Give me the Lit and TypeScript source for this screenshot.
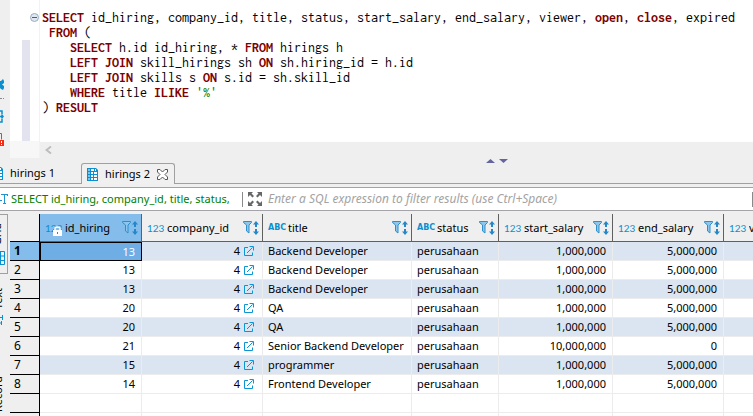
import { LitElement, html, css, svg, nothing } from "lit";
import { customElement, state } from "lit/decorators.js";
import { classMap } from "lit/directives/class-map.js";

type Token = [string, "k" | "s" | ""];

const QUERY: Token[][] = [
  [["SELECT", "k"], [" id_hiring, company_id, title, status, start_salary, end_salary, viewer, ", ""], ["open", "k"], [", ", ""], ["close", "k"], [", expired", ""]],
  [[" ", ""], ["FROM", "k"], [" (", ""]],
  [["    ", ""], ["SELECT", "k"], [" h.id id_hiring, * ", ""], ["FROM", "k"], [" hirings h", ""]],
  [["    ", ""], ["LEFT JOIN", "k"], [" skill_hirings sh ", ""], ["ON", "k"], [" sh.hiring_id = h.id", ""]],
  [["    ", ""], ["LEFT JOIN", "k"], [" skills s ", ""], ["ON", "k"], [" s.id = sh.skill_id", ""]],
  [["    ", ""], ["WHERE", "k"], [" title ", ""], ["ILIKE", "k"], [" ", ""], ["'%'", "s"]],
  [[") ", ""], ["RESULT", "k"]],
];

interface Column {
  name: string;
  kind: "num" | "text";
  width: number;
  link?: boolean;
  locked?: boolean;
}

const COLUMNS: Column[] = [
  { name: "id_hiring", kind: "num", width: 102, locked: true },
  { name: "company_id", kind: "num", width: 121, link: true },
  { name: "title", kind: "text", width: 149 },
  { name: "status", kind: "text", width: 87 },
  { name: "start_salary", kind: "num", width: 114 },
  { name: "end_salary", kind: "num", width: 111 },
  { name: "viewer", kind: "num", width: 111 },
];

const ROWS: string[][] = [
  ["13", "4", "Backend Developer", "perusahaan", "1,000,000", "5,000,000", ""],
  ["13", "4", "Backend Developer", "perusahaan", "1,000,000", "5,000,000", ""],
  ["13", "4", "Backend Developer", "perusahaan", "1,000,000", "5,000,000", ""],
  ["20", "4", "QA", "perusahaan", "1,000,000", "5,000,000", ""],
  ["20", "4", "QA", "perusahaan", "1,000,000", "5,000,000", ""],
  ["21", "4", "Senior Backend Developer", "perusahaan", "10,000,000", "0", ""],
  ["15", "4", "programmer", "perusahaan", "1,000,000", "5,000,000", ""],
  ["14", "4", "Frontend Developer", "perusahaan", "1,000,000", "5,000,000", ""],
];

const icon = (w: number, h: number, body: unknown) =>
  html`<svg width=${w} height=${h} viewBox="0 0 ${w} ${h}" aria-hidden="true">${body}</svg>`;

const gridIcon = icon(11, 13, svg`
  <path d="M0 0h9l2 2v11H0z" fill="#0a8fcf"/>
  <path d="M1 1h2v2H1zM1 4h2v2H1zM1 7h2v2H1zM1 10h2v2H1z" fill="#7cc4ea"/>
  <path d="M4 1h3v2H4zM8 1h1v2H8zM4 4h2v2H4zM7 4h3v2H7zM4 7h2v2H4zM7 7h3v2H7zM4 10h2v2H4zM7 10h3v2H7z" fill="#fff"/>`);

const closeIcon = icon(11, 11, svg`
  <path d="M.5 .5h2.500l2.500 2.500 2.500-2.500h2.500v2.500l-2.500 2.500 2.500 2.500v2.500h-2.500l-2.500-2.500-2.500 2.500h-2.500v-2.500l2.500-2.500-2.500-2.500z" fill="#fff" stroke="#555"/>`);

const expandIcon = icon(16, 16, svg`
  <g fill="#666"><path d="M1 1h5L4.500 2.500l2.500 2.500-1.500 1.500L3 4 1 6z"/>
  <path d="M15 1v5l-2-2-2.500 2.500L9 5l2.500-2.500L10 1z"/>
  <path d="M1 15v-5l2 2 2.500-2.500L7 11l-2.500 2.500L6 15z"/>
  <path d="M15 15h-5l1.500-1.500L9 11l1.500-1.500L13 12l2-2z"/></g>`);

const filterIcon = icon(16, 16, svg`
  <path d="M.5 1.500h8v1l-2.500 2.500v8l-2.500-2v-6L.5 2.500z" fill="#8cc6ec" stroke="#2f8fca"/>
  <path d="M13 1l3 3.500h-2v2.500h-2V4.500H10zM13 15l3-3.500h-2V9h-2v2.500H10z" fill="#2587c8"/>`);

const linkIcon = icon(11, 11, svg`
  <path d="M5 1.500H1.500v8h8V6.500M4 7l5.500-5.500M6.500 .5h4v4" fill="none" stroke="#0a96d4"/>`);

const lockIcon = icon(9, 10, svg`
  <path d="M2 5V2.500Q2 1 4.500 1T7 2.500V5" fill="none" stroke="#fff" stroke-width="1.500"/>
  <path d="M0 4h9v6H0z" fill="#fff"/><path d="M4 6h1v2H4z" fill="#2587c8"/>`);

@customElement("sql-editor")
class SqlEditor extends LitElement {
  static styles = css`
    :host { display: block; background: #efefef; }
    .body { display: flex; }
    .tools { width: 10px; flex: none; display: flex; flex-direction: column; gap: 9px; padding-top: 79px; box-sizing: border-box; }
    .tools svg { display: block; }
    .ruler { width: 29px; flex: none; display: flex; flex-direction: column; border-right: 1px solid #f2f2f2; background: #fff; }
    .marks { height: 141px; box-sizing: border-box; padding-top: 13px; position: relative; }
    .fold { display: block; margin-left: 20px; width: 9px; height: 9px; padding: 0; border: 0; background: none; }
    .fold svg, .scroll svg { display: block; }
    .change { position: absolute; left: 12px; top: 40px; bottom: 0; width: 8px; background: #e3e3f0; }
    .foot { height: 17px; background: #f7f7f7; }
    .main { flex: 1; min-width: 0; }
    .code { margin: 0; height: 142px; box-sizing: border-box; padding: 10px 0 0 2px; background: #fff; overflow: hidden; color: #000;
      font: 14px/15px Inconsolata, "Liberation Mono", monospace; }
    .k { color: #7d0000; font-weight: 700; }
    .s { color: #008000; }
    .scroll { height: 16px; padding: 4px 0 0 5px; box-sizing: border-box; }
    .scroll button { display: block; padding: 0; border: 0; background: none; }
  `;
  render() {
    return html`<div class="body">
      <div class="tools">
        ${icon(5, 22, svg`
          <path d="M0 2h1l2-2 1 2v2L2 5.500l2 1.500v2l-1 2-2-1-1-1z" fill="#0a8fcf"/>
          <path d="M0 19h2v1H0zM3 19h1v1H3z" fill="#888"/>`)}
        ${icon(4, 13, svg`<path d="M0 1h2v3M0 6.500h3M1.500 4.500l1.500 2L1.500 8.500M0 12h2V9" fill="none" stroke="#0a8fcf" stroke-width="1.500"/>`)}
        ${icon(4, 15, svg`<path d="M0 1.500h1.500v6" fill="none" stroke="#0a8fcf"/><path d="M0 8h4v6H0z" fill="#f52a12"/><path d="M1 9h1v2H1zM1 12h1v1H1z" fill="#fff"/>`)}
      </div>
      <div class="ruler">
        <div class="marks">
          <button class="fold" aria-label="Collapse">
            ${icon(9, 9, svg`<circle cx="4.500" cy="4.500" r="4" fill="#dfe8f0" stroke="#98adc0"/><path d="M2 4.500h5" stroke="#41617e"/>`)}
          </button>
          <div class="change"></div>
        </div>
        <div class="foot"></div>
      </div>
      <div class="main">
        <pre class="code">${QUERY.map((l) => html`${l.map(([t, c]) => (c ? html`<span class=${c}>${t}</span>` : t))}${"\n"}`)}</pre>
        <div class="scroll"><button aria-label="Scroll left">${icon(7, 8, svg`<path d="M6 .5L1.500 4 6 7.500" fill="none" stroke="#bdbdbd" stroke-width="2"/>`)}</button></div>
      </div>
    </div>`;
  }
}

@customElement("result-tabs")
class ResultTabs extends LitElement {
  @state() active = 1;
  static styles = css`
    :host { display: block; background: #efefef; position: relative; }
    .bar { display: flex; height: 26px; box-sizing: border-box; align-items: flex-end; border-bottom: 1px solid #a0a0a0; }
    .tab { display: flex; align-items: center; gap: 7px; height: 20px; margin: 0; padding: 0; border: 0; background: none; color: #000;
      font: 11px/20px "Noto Sans", "Open Sans", sans-serif; white-space: nowrap; }
    .first { width: 81px; overflow: hidden; }
    .active { height: 21px; padding: 0 6px 0 5px; border: 1px solid #a0a0a0; border-bottom: 0; border-radius: 3px 3px 0 0; background: #f0f0f0; margin-bottom: -1px; }
    .edge { width: 3px; flex: none; overflow: hidden; display: flex; justify-content: flex-end; }
    svg { display: block; flex: none; }
    .sash { position: absolute; left: 486px; top: 1px; display: flex; gap: 4px; }
    .sash button { display: block; padding: 0; border: 0; background: none; }
  `;
  render() {
    return html`<div class="bar">
        <button class=${classMap({ tab: true, first: true })} @click=${() => (this.active = 0)}><span class="edge">${gridIcon}</span>hirings 1</button>
        <button class="tab active" @click=${() => (this.active = 1)}>${gridIcon}hirings 2${closeIcon}</button>
      </div>
      <div class="sash">
        <button aria-label="Collapse up">${icon(9, 4, svg`<path d="M0 4L4.500 0 9 4z" fill="#6464a0"/>`)}</button>
        <button aria-label="Collapse down">${icon(9, 4, svg`<path d="M0 0h9L4.500 4z" fill="#6464a0"/>`)}</button>
      </div>`;
  }
}

@customElement("filter-bar")
class FilterBar extends LitElement {
  static styles = css`
    :host { display: block; background: #efefef; padding: 3px 0; }
    .bar { display: flex; align-items: center; height: 24px; box-sizing: border-box; background: #fff; border: solid #a3a3a8; border-width: 1px 0; }
    .query { width: 231px; margin-left: 3px; flex: none; overflow: hidden; white-space: nowrap; color: #008000; font: 11px/16px "Noto Sans", sans-serif; }
    .sep { width: 1px; height: 15px; background: #8a8a8a; flex: none; }
    svg { display: block; flex: none; }
    button { padding: 0; border: 0; background: none; margin: 0 5px 0 4px; }
    input { flex: 1; min-width: 0; padding: 0; border: 0; outline: 0; background: none; font: italic 12px/16px "Noto Sans", sans-serif; color: #000; }
    input::placeholder { color: #a3a3a3; opacity: 1; }
  `;
  render() {
    return html`<div class="bar">
      ${icon(8, 12, svg`<path d="M0 7.500h2M1 1.500h7M4.500 1.500v9M3 10.500h3M7.500 1v2" fill="none" stroke="#1e93cf"/>`)}
      <span class="query">SELECT id_hiring, company_id, title, status,</span>
      <span class="sep"></span>
      <button aria-label="Expand filter">${expandIcon}</button>
      <input type="text" aria-label="Filter expression" placeholder="Enter a SQL expression to filter results (use Ctrl+Space)" />
      <span class="sep"></span>
    </div>`;
  }
}

@customElement("result-grid")
class ResultGrid extends LitElement {
  static styles = css`
    :host { display: block; flex: 1; min-width: 0; overflow: hidden; }
    table { border-collapse: separate; border-spacing: 0; table-layout: fixed; width: 825px; color: #000; font: 11px/18px "Noto Sans", sans-serif; }
    th, td { box-sizing: border-box; padding: 0; white-space: nowrap; overflow: hidden; font-weight: 400; text-align: left; }
    thead th { height: 28px; border-right: 1px solid #606060; border-bottom: 1px solid #606060; background: #efefef; }
    thead th.corner { border-right-color: #000; border-bottom-color: #000; }
    thead th.on { background: #84bdeb; }
    .head { display: flex; align-items: center; gap: 3px; padding: 0 3px 0 5px; }
    .head svg { display: block; flex: none; }
    .name { flex: 1; min-width: 0; overflow: hidden; }
    .type { flex: none; width: 17px; position: relative; color: #0a8fcf; font: 10px/18px Lato, sans-serif; }
    .type.text { font: 700 8px/18px "DejaVu Sans", sans-serif; }
    .type svg { position: absolute; right: 0; bottom: 1px; }
    .head button { padding: 0; border: 0; background: none; }
    tbody th, tbody td { height: 19px; }
    tbody th { padding-left: 4px; font-size: 12px; background: #efefef; border-right: 1px solid #000; border-bottom: 1px solid #000; }
    tbody th.on { background: #84bdeb; font-weight: 700; }
    td { padding: 0 6px 0 5px; border-right: 1px solid #ececec; border-bottom: 1px solid #ececec; background: #fff; }
    .odd td { background: #dbe5f1; }
    .num { text-align: right; }
    td.link { padding-right: 8px; }
    .ref { display: flex; align-items: center; justify-content: flex-end; gap: 3px; }
    .ref a, .ref svg { display: block; }
    .odd td.sel { background: #6fade5; color: #fff; border: 1px solid #000; padding: 0 6px 0 4px; line-height: 17px; }
  `;
  render() {
    return html`<table>
      <colgroup><col style="width:30px" />${COLUMNS.map((c) => html`<col style="width:${c.width}px" />`)}</colgroup>
      <thead><tr><th class="corner"></th>
        ${COLUMNS.map((c, i) => html`<th scope="col" class=${classMap({ on: i === 0 })}>
          <div class="head">
            <span class="type ${c.kind}">${c.kind === "num" ? "123" : "ABC"}${c.locked ? lockIcon : nothing}</span>
            <span class="name">${c.name}</span>
            <button aria-label="Filter ${c.name}">${filterIcon}</button>
          </div></th>`)}
      </tr></thead>
      <tbody>
        ${ROWS.map((r, y) => html`<tr class=${classMap({ odd: y % 2 === 0 })}>
          <th scope="row" class=${classMap({ on: y === 0 })}>${y + 1}</th>
          ${r.map((v, x) => html`<td class=${classMap({ num: COLUMNS[x].kind === "num", link: !!COLUMNS[x].link, sel: x === 0 && y === 0 })}>${COLUMNS[x].link
            ? html`<span class="ref">${v}<a href="#company-${v}" aria-label="Open company ${v}">${linkIcon}</a></span>`
            : v}</td>`)}
        </tr>`)}
        ${[0, 1].map(() => html`<tr><th></th>${COLUMNS.map(() => html`<td></td>`)}</tr>`)}
      </tbody>
    </table>`;
  }
}

@customElement("side-tabs")
class SideTabs extends LitElement {
  static styles = css`
    :host { display: block; width: 10px; flex: none; }
    .tabs { display: flex; flex-direction: column; align-items: flex-start; gap: 12px; }
    button { display: flex; flex-direction: column; align-items: flex-end; justify-content: flex-end; gap: 6px; width: 8px; box-sizing: border-box;
      padding: 0 2px 8px 0; border: 0; background: none; overflow: hidden; color: #000; font: 11px/13px "Noto Sans", sans-serif; }
    .on { height: 60px; border: 1px solid #a0a0a0; border-left: 0; }
    .panel { height: 48px; }
    .record { height: 74px; }
    span { writing-mode: vertical-rl; transform: rotate(180deg); margin-right: 2px; }
    svg { display: block; flex: none; }
  `;
  render() {
    return html`<div class="tabs">
      <button class="on"><span>Grid</span>${icon(5, 14, svg`<path d="M0 .5h4.500v13H0M0 5h5M0 9.500h5M.5 0v14" fill="none" stroke="#0a8fcf"/>`)}</button>
      <button class="panel"><span>Text</span>${icon(6, 11, svg`<path d="M0 2.500h3M2.500 0v5M0 8h2M1.500 6v4" fill="none" stroke="#0a8fcf"/>`)}</button>
      <button class="record"><span>Record</span></button>
    </div>`;
  }
}

@customElement("app-root")
class AppRoot extends LitElement {
  static styles = css`
    :host { display: flex; flex-direction: column; height: 100vh; overflow: hidden; background: #efefef; }
    .results { flex: 1; min-height: 0; display: flex; overflow: hidden; }
  `;
  render() {
    return html`<sql-editor></sql-editor>
      <result-tabs></result-tabs>
      <filter-bar></filter-bar>
      <div class="results"><side-tabs></side-tabs><result-grid></result-grid></div>`;
  }
}
